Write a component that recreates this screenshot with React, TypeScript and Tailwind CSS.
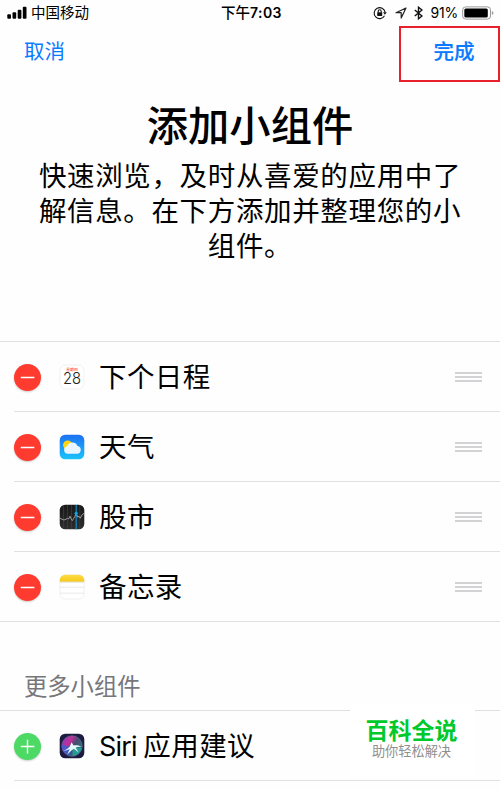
import { ReactNode } from "react";

type WidgetRow = {
    name: ReactNode;
    icon: ReactNode;
};

const CalendarIcon = () => (
    <svg className="block size-[26px]" viewBox="0 0 26 26">
        <rect x="1" y="1" width="24" height="24" rx="5.5" fill="#fff" stroke="#f1f1f1" />
        <text x="13" y="7.4" textAnchor="middle" fontSize="3.8" fontWeight="500" fill="#ff4b40">星期四</text>
        <text x="13" y="20.4" textAnchor="middle" fontSize="16" fontWeight="300" fill="#222" fontFamily="Inter, sans-serif" textLength="18" lengthAdjust="spacingAndGlyphs">28</text>
    </svg>
);

const WeatherIcon = () => (
    <svg className="block size-[26px]" viewBox="0 0 26 26">
        <defs>
            <linearGradient id="sky" x1="0" y1="0" x2="0" y2="1">
                <stop offset="0" stopColor="#1d70f2" />
                <stop offset="1" stopColor="#1bc4fb" />
            </linearGradient>
        </defs>
        <rect x="0.7" y="0.7" width="24.6" height="24.6" rx="5.5" fill="url(#sky)" />
        <circle cx="8.7" cy="11" r="4.6" fill="#ffd60a" />
        <path d="M8.6 19.8a3.8 3.8 0 0 1-.5-7.5 5.6 5.6 0 0 1 10.4-.4 4 4 0 0 1-.3 7.9z" fill="#e9f6ff" />
    </svg>
);

const StocksIcon = () => (
    <svg className="block size-[26px]" viewBox="0 0 26 26">
        <defs>
            <linearGradient id="board" x1="0" y1="0" x2="0" y2="1">
                <stop offset="0" stopColor="#181818" />
                <stop offset="1" stopColor="#2d2d2e" />
            </linearGradient>
        </defs>
        <rect x="0.7" y="0.7" width="24.6" height="24.6" rx="5.5" fill="url(#board)" />
        <path d="M4.5 1.5v23M8.5 1v24M12.5 1v24M20.8 1.2v23.6" stroke="#444" strokeWidth="0.6" />
        <path d="M17.2 1v24.2" stroke="#0b87bd" strokeWidth="1.3" />
        <path d="M1 14.2l2 1 2 .8 2-.8 1.5-.8 1.2.4 1.4-2.6 1.2 3 1 1.4 1.3-2 1.2-1.8 1.4-3.6 1.5 4 1.3-1 1.2 2 1.8-3.2 2.4-2" fill="none" stroke="#a8a8a8" strokeWidth="0.9" />
        <circle cx="17.2" cy="9.3" r="1.6" fill="#08a5ee" />
    </svg>
);

const NotesIcon = () => (
    <svg className="block size-[26px]" viewBox="0 0 26 26">
        <defs>
            <linearGradient id="pad" x1="0" y1="0" x2="0" y2="1">
                <stop offset="0" stopColor="#fddc48" />
                <stop offset="1" stopColor="#f8c917" />
            </linearGradient>
        </defs>
        <rect x="1" y="1" width="24" height="24" rx="5.5" fill="#fff" stroke="#ececec" strokeWidth="0.8" />
        <path d="M.7 7.7V6.2A5.5 5.5 0 0 1 6.2.7h13.6a5.5 5.5 0 0 1 5.5 5.5v1.5z" fill="url(#pad)" />
        <path d="M1 8.1h24" stroke="#d3cdb8" strokeWidth="0.7" />
        <path d="M1 13.2h24M1 19.2h24" stroke="#e4e4e4" strokeWidth="0.8" />
    </svg>
);

const SiriIcon = () => (
    <svg className="block size-[26px]" viewBox="0 0 26 26">
        <defs>
            <linearGradient id="orb" x1="0" y1="0" x2="1" y2="0.6">
                <stop offset="0" stopColor="#7d3cc8" />
                <stop offset="0.4" stopColor="#c03098" />
                <stop offset="0.65" stopColor="#4a4a72" />
                <stop offset="1" stopColor="#1f8078" />
            </linearGradient>
        </defs>
        <rect x="0.7" y="0.7" width="24.6" height="24.6" rx="5.5" fill="#1c1c40" />
        <circle cx="13" cy="13" r="10.3" fill="url(#orb)" stroke="#6b6b8f" strokeWidth="0.6" />
        <path d="M12.5 14L3 12a10 10 0 0 0 8 10.8z" fill="#2a66d8" opacity="0.75" />
        <path d="M13.5 14l9 1a10 10 0 0 1-9 8z" fill="#23b3a9" opacity="0.65" />
        <path d="M3.8 17.8c3.4-.9 5.7-2.3 7-4.2l1.800-4.400 1.900 3.200c3.200-.2 5.600.2 7.900 1.300-2.500-.2-4.400.1-5.800.7l3 5.200-4.600-3.800-2 1.200-4.800 4.600 2.600-5.500c-2 1.100-4.200 1.700-7 1.700z" fill="#e8fbff" />
    </svg>
);

const StatusBar = () => (
    <div className="flex h-[26px] items-center justify-between pl-[7px] pr-[6px]">
        <div className="flex w-[180px] items-center gap-[4px]">
            <svg className="block h-[14px] w-[20px]" viewBox="0 0 20 14">
                <rect x="0.3" y="8.3" width="3.7" height="4.4" rx="1" />
                <rect x="5.5" y="6.3" width="3.7" height="6.4" rx="1" />
                <rect x="10.7" y="3.7" width="3.7" height="9" rx="1" />
                <rect x="15.8" y="0.8" width="3.7" height="11.9" rx="1" />
            </svg>
            <span className="pb-px text-[14.5px] leading-none">中国移动</span>
        </div>
        <span className="pb-px pl-[2px] text-[14.5px] font-medium leading-none whitespace-nowrap">
            下午<span className="font-[Inter] text-[14px] font-semibold tracking-[0.4px]">7:03</span>
        </span>
        <div className="flex w-[180px] items-center justify-end">
            <svg className="block h-[14px] w-[14px]" viewBox="0 0 14 14" fill="none" stroke="#111" strokeWidth="1.1">
                <path d="M11.5 9.8A5.5 5.5 0 1 1 12.1 6.2" />
                <path d="M10 6.2h3.8l-1.9 2.5z" fill="#111" stroke="none" />
                <path d="M5.2 6.6V5.3a1.5 1.5 0 0 1 3 0v1.3" />
                <rect x="4.2" y="6.2" width="5" height="3.7" rx="0.4" fill="#111" stroke="none" />
            </svg>
            <svg className="ml-[8px] block h-[12px] w-[12px]" viewBox="0 0 12 12" fill="none" stroke="#222" strokeWidth="1.2">
                <path d="M11 1L1 5.7h5.2V11z" strokeLinejoin="round" />
            </svg>
            <svg className="ml-[7px] block h-[14px] w-[9px]" viewBox="0 0 9 15" preserveAspectRatio="none" fill="none" stroke="#111" strokeWidth="1.4">
                <path d="M.8 4.3l7.2 6.4-3.5 3V1.3l3.5 3-7.2 6.4" />
            </svg>
            <span className="ml-[7px] font-[Inter] text-[14px] leading-none tracking-[-0.2px]">91%</span>
            <svg className="ml-[4px] block h-[14px] w-[32px]" viewBox="0 0 32 14">
                <rect x="0.7" y="0.9" width="27.8" height="12.2" rx="3" fill="#fff" stroke="#999" />
                <rect x="2.3" y="2.5" width="23.5" height="9" rx="1.5" />
                <path d="M29.9 5v4c1-.5 1.5-1.1 1.5-2s-.5-1.5-1.5-2z" fill="#999" />
            </svg>
        </div>
    </div>
);

const ToggleButton = ({ add = false }: { add?: boolean }) => (
    <svg className={`block size-[27px] rounded-full shadow-[0_1px_2px_rgba(0,0,0,0.2)] ${add ? "bg-[#4cd964]" : "bg-[#ff3b30]"}`} viewBox="0 0 27 27">
        <path d={add ? "M6.8 13.5h13.6M13.5 6.8v13.6" : "M6.8 13.5h13.6"} stroke="#fff" strokeWidth="1.4" />
    </svg>
);

const DragHandle = () => (
    <div className="flex w-[27px] flex-col gap-[2px]">
        <div className="h-[2px] bg-[#d3d3d6]" />
        <div className="h-[2px] bg-[#d3d3d6]" />
        <div className="h-[2px] bg-[#d3d3d6]" />
    </div>
);

const Row = ({ name, icon, add, last }: WidgetRow & { add?: boolean; last?: boolean }) => (
    <li className={last ? "" : "pl-[14px]"}>
        <div className={`flex h-[70px] items-center border-b border-[#e0e0e2] pr-[18px] ${last ? "pl-[14px]" : ""}`}>
            <div className="pt-px">
                <ToggleButton add={add} />
            </div>
            <div className="ml-[18px]">{icon}</div>
            <span className="ml-[14px] flex-1 pb-px text-[27.5px] leading-none tracking-[0.4px]">{name}</span>
            {!add && <DragHandle />}
        </div>
    </li>
);

const widgets: WidgetRow[] = [
    { name: "下个日程", icon: <CalendarIcon /> },
    { name: "天气", icon: <WeatherIcon /> },
    { name: "股市", icon: <StocksIcon /> },
    { name: "备忘录", icon: <NotesIcon /> },
];

const App = () => {
    return (
        <div className="relative h-[790px] w-[500px] overflow-hidden bg-[#fefefe] font-['Noto_Sans_CJK_SC',sans-serif] text-black">
            <StatusBar />

            <div className="flex h-[56px] justify-between pl-[24px] text-[20.5px] text-[#0a7aff]">
                <button className="h-[48px] leading-none">取消</button>
                <button className="h-[56px] w-[101px] border-2 border-[#e8202c] pb-[8px] pl-[9px] font-medium leading-none [-webkit-text-stroke:0.2px_#0a7aff]">完成</button>
            </div>

            <header className="h-[259px] pt-[17px] text-center">
                <h1 className="text-[41.3px] font-medium leading-[48px]">添加小组件</h1>
                <p className="mt-[10px] text-[27.5px] leading-[35px] tracking-[0.65px]">
                    快速浏览，及时从喜爱的应用中了<br />
                    解信息。在下方添加并整理您的小<br />
                    组件。
                </p>
            </header>

            <ul className="border-t border-[#e0e0e2]">
                {widgets.map((widget, index) => (
                    <Row key={index} {...widget} last={index === widgets.length - 1} />
                ))}
            </ul>

            <h2 className="h-[88px] pl-[24px] pt-[51px] text-[23.3px] leading-[24px] text-[#77777b]">更多小组件</h2>
            <ul className="border-t border-[#e0e0e2]">
                <Row
                    name={<><span className="font-[Inter] text-[27px] tracking-[-0.8px]">Siri</span> 应用建议</>}
                    icon={<SiriIcon />}
                    add
                />
            </ul>

            <div className="absolute left-[350px] top-[705px] flex h-[70px] w-[125px] flex-col items-center bg-white pr-[2px] pt-[12px]">
                <span className="text-[23px] font-bold leading-[24px] text-[#00c92c]">百科全说</span>
                <span className="mt-[3px] text-[13.2px] leading-[14px] text-[#8f8f8f]">助你轻松解决</span>
            </div>
        </div>
    );
};

export default App;
